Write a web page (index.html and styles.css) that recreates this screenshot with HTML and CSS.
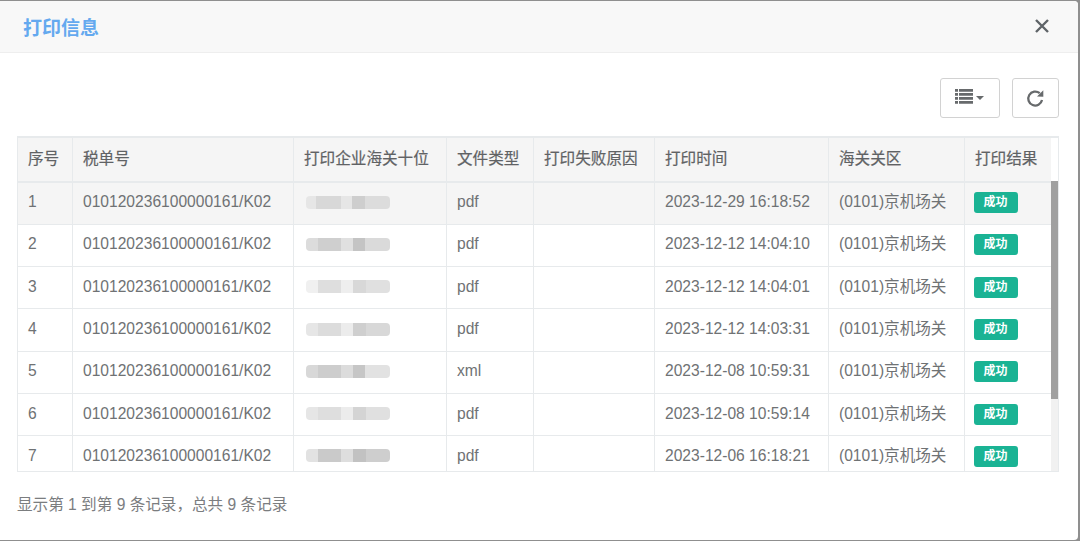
FILE: index.html
```html
<!DOCTYPE html>
<html lang="zh">
<head>
<meta charset="utf-8">
<title>打印信息</title>
<link rel="stylesheet" href="styles.css">
</head>
<body>
<div class="modal">
  <header class="modal-head">
    <h1 class="title">打印信息</h1>
    <button class="close" aria-label="关闭">
      <svg width="16" height="16" viewBox="0 0 16 16"><path d="M2 2L14 14M14 2L2 14" stroke="#5f6468" stroke-width="2.4" fill="none"/></svg>
    </button>
  </header>
  <div class="modal-body">
    <div class="toolbar">
      <button class="tool tool-list" aria-label="列">
        <svg width="18" height="17" viewBox="0 0 18 17"><path fill="#676a6c" d="M0 1h3v2.800H0zM4 1h14v2.800H4zM0 5h3v2.800H0zM4 5h14v2.800H4zM0 9h3v2.800H0zM4 9h14v2.800H4zM0 13h3v2.800H0zM4 13h14v2.800H4z"/></svg>
        <span class="caret"></span>
      </button>
      <button class="tool tool-refresh" aria-label="刷新">
        <svg width="19" height="19" viewBox="0 0 18 18"><path d="M15.200 10.500A6.600 6.600 0 1 1 13 4" fill="none" stroke="#676a6c" stroke-width="2.200"/><path fill="#676a6c" d="M10.400 7L16.400 7.400V1.200z"/></svg>
      </button>
    </div>
    <div class="table-box">
      <div class="table-clip">
        <table class="grid">
          <colgroup>
            <col class="c1"><col class="c2"><col class="c3"><col class="c4"><col class="c5"><col class="c6"><col class="c7"><col class="c8">
          </colgroup>
          <thead>
            <tr><th>序号</th><th>税单号</th><th>打印企业海关十位</th><th>文件类型</th><th>打印失败原因</th><th>打印时间</th><th>海关关区</th><th>打印结果</th></tr>
          </thead>
          <tbody>
            <tr class="hover"><td>1</td><td>010120236100000161/K02</td><td><span class="mask m1"></span></td><td>pdf</td><td></td><td>2023-12-29 16:18:52</td><td>(0101)京机场关</td><td><span class="badge">成功</span></td></tr>
            <tr><td>2</td><td>010120236100000161/K02</td><td><span class="mask m2"></span></td><td>pdf</td><td></td><td>2023-12-12 14:04:10</td><td>(0101)京机场关</td><td><span class="badge">成功</span></td></tr>
            <tr><td>3</td><td>010120236100000161/K02</td><td><span class="mask m3"></span></td><td>pdf</td><td></td><td>2023-12-12 14:04:01</td><td>(0101)京机场关</td><td><span class="badge">成功</span></td></tr>
            <tr><td>4</td><td>010120236100000161/K02</td><td><span class="mask m4"></span></td><td>pdf</td><td></td><td>2023-12-12 14:03:31</td><td>(0101)京机场关</td><td><span class="badge">成功</span></td></tr>
            <tr><td>5</td><td>010120236100000161/K02</td><td><span class="mask m5"></span></td><td>xml</td><td></td><td>2023-12-08 10:59:31</td><td>(0101)京机场关</td><td><span class="badge">成功</span></td></tr>
            <tr><td>6</td><td>010120236100000161/K02</td><td><span class="mask m6"></span></td><td>pdf</td><td></td><td>2023-12-08 10:59:14</td><td>(0101)京机场关</td><td><span class="badge">成功</span></td></tr>
            <tr><td>7</td><td>010120236100000161/K02</td><td><span class="mask m7"></span></td><td>pdf</td><td></td><td>2023-12-06 16:18:21</td><td>(0101)京机场关</td><td><span class="badge">成功</span></td></tr>
          </tbody>
        </table>
      </div>
      <div class="scrollbar">
        <div class="scroll-corner"></div>
        <div class="scroll-track"><div class="scroll-thumb"></div></div>
      </div>
    </div>
    <p class="summary">显示第 1 到第 9 条记录，总共 9 条记录</p>
  </div>
</div>
</body>
</html>
```
FILE: styles.css
```css
* { box-sizing: border-box; }
html, body { margin: 0; height: 100%; }
body {
  background: #8f8f8f;
  padding: 1px 2px 1px 0;
  font-family: "Liberation Sans", "Noto Sans CJK SC", sans-serif;
  color: #6f7274;
  overflow: hidden;
}
.modal {
  height: 539px;
  background: #fff;
  border-radius: 0 4px 4px 0;
  overflow: hidden;
}
.modal-head {
  height: 52px;
  background: #f8f8f8;
  border-bottom: 1px solid #eeeeee;
  display: flex;
  align-items: center;
  justify-content: space-between;
  padding: 0 28px 1px 23px;
}
.title {
  margin: 0;
  font-size: 19px;
  font-weight: 700;
  color: #64a9ef;
}
.close {
  border: 0;
  background: none;
  padding: 0;
  display: flex;
}
.modal-body { padding: 25px 19px 0 17px; }
.toolbar {
  display: flex;
  justify-content: flex-end;
  gap: 12px;
  height: 58px;
}
.tool {
  height: 40px;
  background: #fff;
  border: 1px solid #d2d2d2;
  border-radius: 3px;
  padding: 0;
  display: flex;
  align-items: center;
  justify-content: center;
}
.tool-list { width: 60px; gap: 3px; padding: 0 1px 3px 0; }
.tool-refresh { width: 47px; }
.caret {
  width: 0;
  height: 0;
  border-left: 4px solid transparent;
  border-right: 4px solid transparent;
  border-top: 4px solid #676a6c;
  margin-top: 3px;
}
.table-box {
  display: flex;
  height: 336px;
  border: 1px solid #e7eaec;
  border-top-width: 2px;
}
.table-clip { width: 1034px; overflow: hidden; }
.grid {
  width: 1034px;
  table-layout: fixed;
  border-collapse: collapse;
  font-size: 15.600px;
  line-height: 20px;
}
.c1 { width: 54px; }
.c2 { width: 221px; }
.c3 { width: 153px; }
.c4 { width: 87px; }
.c5 { width: 121px; }
.c6 { width: 174px; }
.c7 { width: 136px; }
.c8 { width: 88px; }
th, td {
  border: 1px solid #e7eaec;
  padding: 0 0 2px 10.500px;
  text-align: left;
  white-space: nowrap;
  overflow: hidden;
}
th:first-child, td:first-child { border-left: 0; padding-left: 10px; }
thead tr { height: 44px; background: #f5f5f5; }
th {
  font-weight: 400;
  font-size: 15.600px;
  color: #5f6264;
  border-top: 0;
  border-bottom-width: 2px;
  -webkit-text-stroke: 0.2px #5f6264;
}
tbody tr { height: 42.300px; }
tr.hover { background: #f5f5f5; }
.mask {
  display: block;
  width: 84px;
  height: 13px;
  margin: 0 0 0 1.500px;
  border-radius: 4px;
  filter: blur(0.6px);
}
.m1 { background: linear-gradient(90deg, #e6e6e6 0 12%, #d8d8d8 12% 42%, #e6e6e6 42% 55%, #cecece 55% 70%, #dcdcdc 70% 100%); }
.m2 { background: linear-gradient(90deg, #dcdcdc 0 14%, #cfcfcf 14% 42%, #e0e0e0 42% 56%, #c4c4c4 56% 70%, #dadada 70% 100%); }
.m3 { background: linear-gradient(90deg, #f0f0f0 0 14%, #dedede 14% 42%, #eeeeee 42% 56%, #d8d8d8 56% 72%, #e0e0e0 72% 100%); }
.m4 { background: linear-gradient(90deg, #e6e6e6 0 14%, #dcdcdc 14% 42%, #ececec 42% 56%, #cfcfcf 56% 72%, #d8d8d8 72% 100%); }
.m5 { background: linear-gradient(90deg, #d8d8d8 0 14%, #cdcdcd 14% 42%, #dcdcdc 42% 56%, #c6c6c6 56% 70%, #e2e2e2 70% 100%); }
.m6 { background: linear-gradient(90deg, #e6e6e6 0 14%, #dedede 14% 42%, #ececec 42% 56%, #d4d4d4 56% 72%, #e0e0e0 72% 100%); }
.m7 { background: linear-gradient(90deg, #e2e2e2 0 14%, #cacaca 14% 42%, #dedede 42% 56%, #c2c2c2 56% 72%, #cecece 72% 100%); }
.badge {
  display: inline-block;
  width: 44px;
  height: 21px;
  line-height: 21px;
  margin: 1px 0 0 -1.500px;
  background: #1ab394;
  border-radius: 3px;
  color: #fff;
  font-size: 12px;
  font-weight: 700;
  text-align: center;
  vertical-align: middle;
}
.scrollbar {
  width: 7px;
  display: flex;
  flex-direction: column;
}
.scroll-corner { height: 43px; background: #fff; }
.scroll-track { flex: 1; background: #f1f1f1; }
.scroll-thumb { height: 218px; background: #a0a0a0; }
.summary {
  margin: 21px 0 0;
  font-size: 15.600px;
  color: #7b7d7f;
  line-height: 24px;
}
```
